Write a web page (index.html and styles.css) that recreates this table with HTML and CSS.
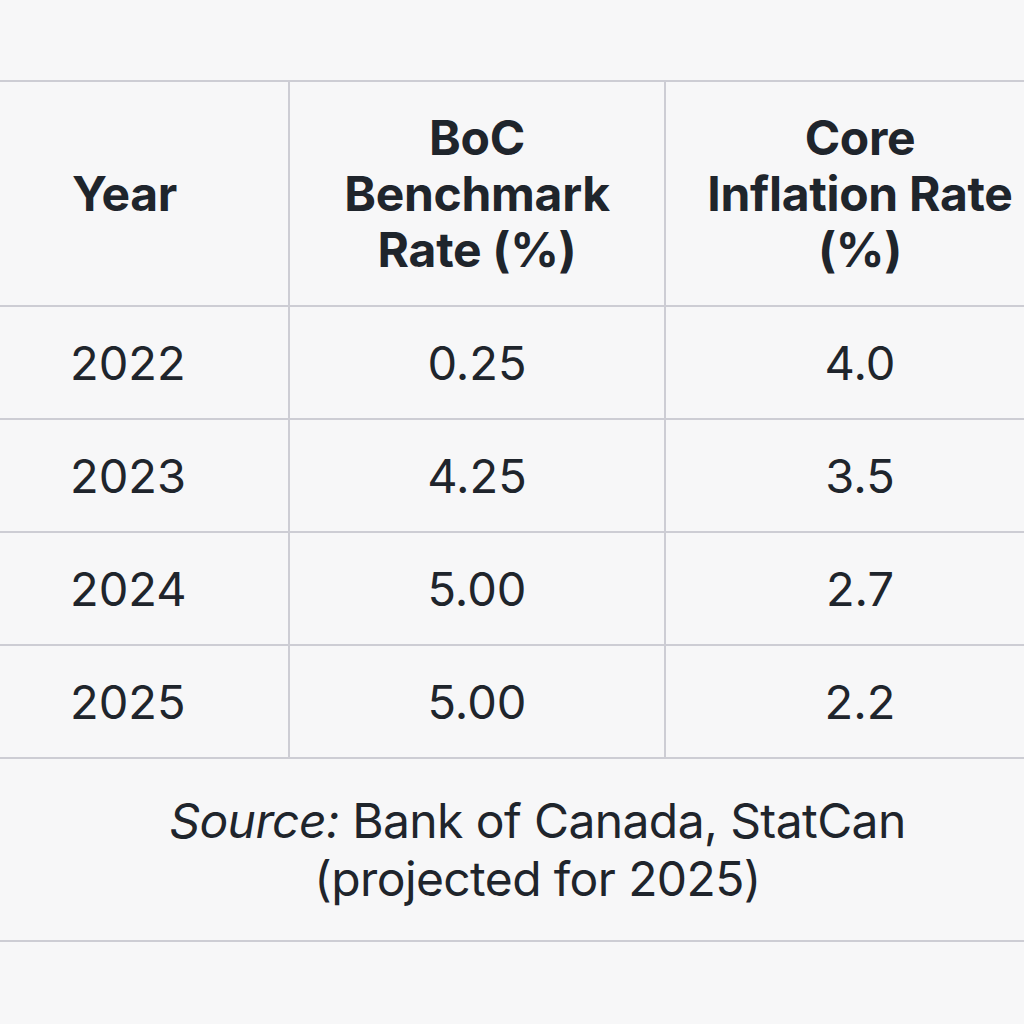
FILE: index.html
```html
<!DOCTYPE html>
<html lang="en">
<head>
<meta charset="utf-8">
<title>BoC Benchmark Rate and Core Inflation</title>
<link rel="stylesheet" href="styles.css">
</head>
<body>
<main class="page">
  <table class="rates">
    <colgroup>
      <col class="c1">
      <col class="c2">
      <col class="c3">
    </colgroup>
    <thead>
      <tr>
        <th class="col-year">Year</th>
        <th>BoC<br>Benchmark<br>Rate (%)</th>
        <th>Core<br>Inflation Rate<br>(%)</th>
      </tr>
    </thead>
    <tbody>
      <tr><td class="col-year">2022</td><td>0.25</td><td>4.0</td></tr>
      <tr><td class="col-year">2023</td><td>4.25</td><td>3.5</td></tr>
      <tr><td class="col-year">2024</td><td>5.00</td><td>2.7</td></tr>
      <tr><td class="col-year">2025</td><td>5.00</td><td>2.2</td></tr>
    </tbody>
  </table>
  <div class="source">
    <p class="source-text"><em>Source:</em> Bank of Canada, StatCan<br>(projected for 2025)</p>
  </div>
</main>
</body>
</html>
```

FILE: styles.css
```css
html, body {
  margin: 0;
  padding: 0;
}
body {
  background: #f7f7f8;
  color: #1f252c;
  font-family: Inter, "Noto Sans", sans-serif;
  overflow: hidden;
  width: 1024px;
  height: 1024px;
}
.page {
  padding-top: 80px;
  width: 1075px;
}
.rates {
  border-collapse: collapse;
  width: 1055px;
  table-layout: fixed;
}
.rates .c1 { width: 289px; }
.rates .c2 { width: 376px; }
.rates .c3 { width: 390px; }
.rates th,
.rates td {
  border: 2px solid #cdcdd4;
  text-align: center;
  padding: 0;
  white-space: nowrap;
}
.rates th:first-child,
.rates td:first-child {
  border-left: none;
}
.rates th {
  height: 223px;
  font-size: 48px;
  font-weight: 700;
  line-height: 56px;
  letter-spacing: -0.3px;
}
.rates td {
  height: 111px;
  font-size: 47px;
  font-weight: 400;
}
.rates th.col-year {
  text-align: left;
  padding-left: 72px;
}
.rates td.col-year {
  text-align: left;
  padding-left: 70px;
}
.source {
  height: 181px;
  border-bottom: 2px solid #cdcdd4;
  display: flex;
  align-items: center;
  justify-content: center;
}
.source-text {
  margin: 0;
  text-align: center;
  font-size: 48px;
  line-height: 58px;
  letter-spacing: -0.6px;
}
.source-text em {
  font-style: italic;
}
```
